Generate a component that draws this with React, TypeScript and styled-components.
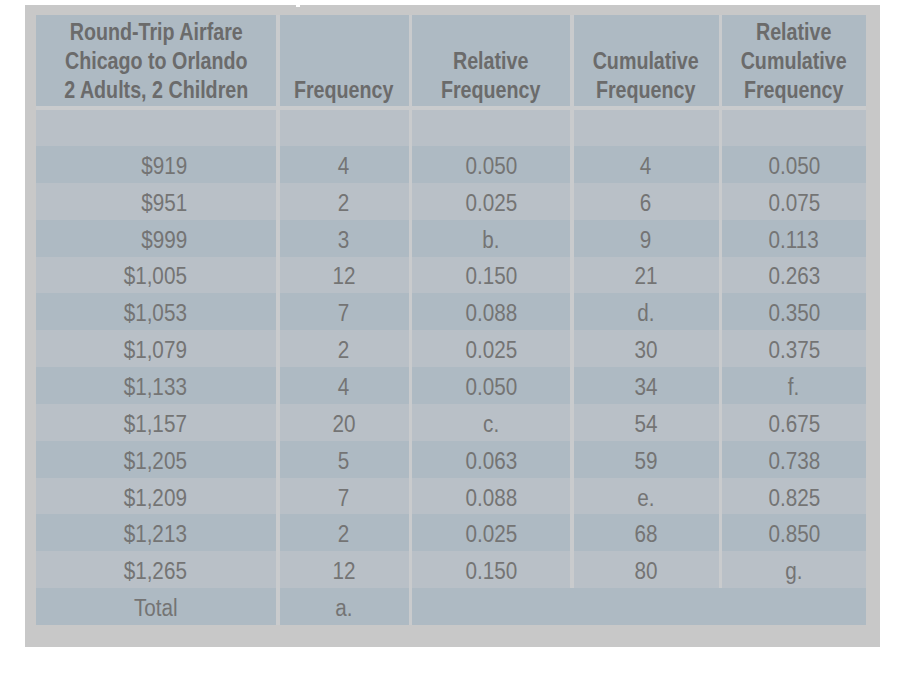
import React from "react";
import styled, { createGlobalStyle } from "styled-components";

const GlobalStyle = createGlobalStyle`
  html, body {
    margin: 0;
    padding: 0;
    background: #ffffff;
  }
  body {
    padding: 5px 0 0 25px;
    font-family: "Liberation Sans", Arial, sans-serif;
  }
`;

type Row = {
  fare: string;
  freq: string;
  rel: string;
  cum: string;
  relCum: string;
};

const rows: Row[] = [
  { fare: "$919", freq: "4", rel: "0.050", cum: "4", relCum: "0.050" },
  { fare: "$951", freq: "2", rel: "0.025", cum: "6", relCum: "0.075" },
  { fare: "$999", freq: "3", rel: "b.", cum: "9", relCum: "0.113" },
  { fare: "$1,005", freq: "12", rel: "0.150", cum: "21", relCum: "0.263" },
  { fare: "$1,053", freq: "7", rel: "0.088", cum: "d.", relCum: "0.350" },
  { fare: "$1,079", freq: "2", rel: "0.025", cum: "30", relCum: "0.375" },
  { fare: "$1,133", freq: "4", rel: "0.050", cum: "34", relCum: "f." },
  { fare: "$1,157", freq: "20", rel: "c.", cum: "54", relCum: "0.675" },
  { fare: "$1,205", freq: "5", rel: "0.063", cum: "59", relCum: "0.738" },
  { fare: "$1,209", freq: "7", rel: "0.088", cum: "e.", relCum: "0.825" },
  { fare: "$1,213", freq: "2", rel: "0.025", cum: "68", relCum: "0.850" },
  { fare: "$1,265", freq: "12", rel: "0.150", cum: "80", relCum: "g." },
];

const DARK = "#aebac3";
const LIGHT = "#b9c0c7";

const Head = ({ lines }: { lines: string[] }) => (
  <HeadCell>
    <HeadText>
      {lines.map((l, i) => (
        <React.Fragment key={l}>
          {i > 0 && <br />}
          {l}
        </React.Fragment>
      ))}
    </HeadText>
  </HeadCell>
);

const App = () => {
  return (
    <>
      <GlobalStyle />
      <Panel>
        <Table>
          <Head lines={["Round-Trip Airfare", "Chicago to Orlando", "2 Adults, 2 Children"]} />
          <Head lines={["Frequency"]} />
          <Head lines={["Relative", "Frequency"]} />
          <Head lines={["Cumulative", "Frequency"]} />
          <Head lines={["Relative", "Cumulative", "Frequency"]} />

          {[0, 1, 2, 3, 4].map((i) => (
            <Cell key={"blank" + i} $shade={LIGHT} />
          ))}

          {rows.map((r, i) => {
            const shade = i % 2 === 0 ? DARK : LIGHT;
            return (
              <React.Fragment key={r.fare}>
                <FareCell $shade={shade}>
                  <Value $origin="right">{r.fare}</Value>
                </FareCell>
                <Cell $shade={shade}>
                  <Value>{r.freq}</Value>
                </Cell>
                <Cell $shade={shade}>
                  <Value>{r.rel}</Value>
                </Cell>
                <Cell $shade={shade}>
                  <Value>{r.cum}</Value>
                </Cell>
                <Cell $shade={shade}>
                  <Value>{r.relCum}</Value>
                </Cell>
              </React.Fragment>
            );
          })}

          <Cell $shade={DARK}>
            <Value>Total</Value>
          </Cell>
          <Cell $shade={DARK}>
            <Value>a.</Value>
          </Cell>
          <Cell $shade={DARK} $span={3} />
        </Table>
      </Panel>
    </>
  );
};

export default App;

const Panel = styled.div`
  position: relative;
  width: 855px;
  box-sizing: border-box;
  padding: 10px 14px 22px 11px;
  background: #c8c8c8;

  &::before {
    content: "";
    position: absolute;
    top: 0;
    left: 271px;
    width: 4px;
    height: 2px;
    background: #ffffff;
  }
`;

const Table = styled.div`
  display: grid;
  grid-template-columns: 240px 129px 158px 145px 144px;
  grid-template-rows: 95px 36px repeat(13, 36.85px);
  column-gap: 3.5px;
  background: #c9cbcd;
`;

const HeadCell = styled.div`
  display: flex;
  flex-direction: column;
  justify-content: flex-end;
  align-items: center;
  background: ${DARK};
  border-bottom: 4px solid #c9cbcd;
  padding-bottom: 2px;
  overflow: hidden;
`;

const HeadText = styled.span`
  display: inline-block;
  white-space: nowrap;
  text-align: center;
  color: #6b6b6b;
  font-weight: bold;
  font-size: 24px;
  line-height: 29px;
  transform: scaleX(0.82);
  transform-origin: center bottom;
`;

const Cell = styled.div<{ $shade: string; $span?: number }>`
  display: flex;
  align-items: center;
  justify-content: center;
  padding-top: 3px;
  grid-column: ${(p) => (p.$span ? `span ${p.$span}` : "auto")};
  background: ${(p) => p.$shade};
`;

const FareCell = styled(Cell)`
  justify-content: flex-end;
  padding-right: 89px;
`;

const Value = styled.span<{ $origin?: string }>`
  display: inline-block;
  white-space: nowrap;
  color: #747474;
  font-size: 23.5px;
  line-height: 28px;
  transform: scaleX(0.88);
  transform-origin: ${(p) => p.$origin ?? "center"} center;
`;
